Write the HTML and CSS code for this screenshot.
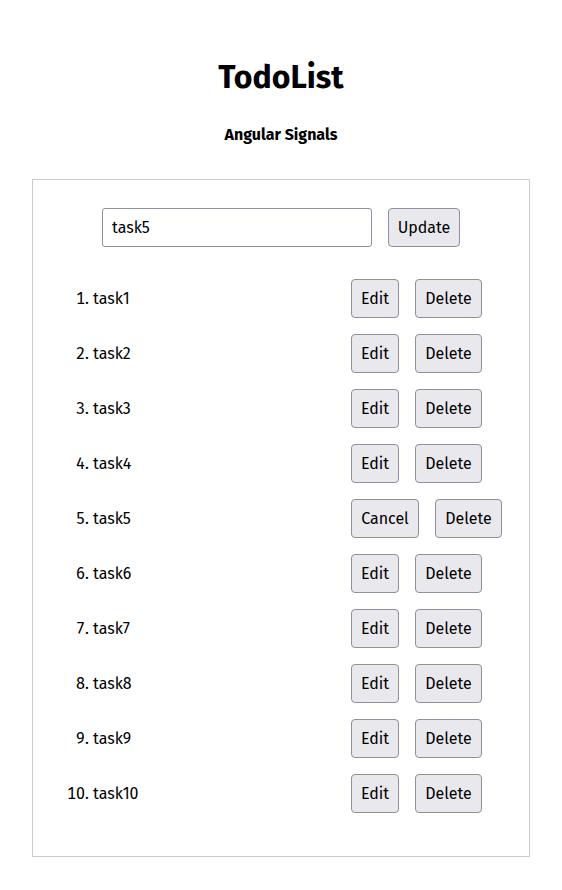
FILE: index.html
```html
<!DOCTYPE html>
<html lang="en">
<head>
<meta charset="utf-8">
<title>TodoList</title>
<link rel="stylesheet" href="styles.css">
</head>
<body>
<header class="header">
  <h1 class="title">TodoList</h1>
  <h2 class="subtitle">Angular Signals</h2>
</header>
<main class="card">
  <form class="form">
    <input class="field" type="text" value="task5">
    <button class="btn btn-update" type="button">Update</button>
  </form>
  <ol class="list">
    <li class="item"><span class="label">task1</span><span class="actions"><button class="btn btn-edit" type="button">Edit</button><button class="btn btn-delete" type="button">Delete</button></span></li>
    <li class="item"><span class="label">task2</span><span class="actions"><button class="btn btn-edit" type="button">Edit</button><button class="btn btn-delete" type="button">Delete</button></span></li>
    <li class="item"><span class="label">task3</span><span class="actions"><button class="btn btn-edit" type="button">Edit</button><button class="btn btn-delete" type="button">Delete</button></span></li>
    <li class="item"><span class="label">task4</span><span class="actions"><button class="btn btn-edit" type="button">Edit</button><button class="btn btn-delete" type="button">Delete</button></span></li>
    <li class="item"><span class="label">task5</span><span class="actions"><button class="btn btn-cancel" type="button">Cancel</button><button class="btn btn-delete" type="button">Delete</button></span></li>
    <li class="item"><span class="label">task6</span><span class="actions"><button class="btn btn-edit" type="button">Edit</button><button class="btn btn-delete" type="button">Delete</button></span></li>
    <li class="item"><span class="label">task7</span><span class="actions"><button class="btn btn-edit" type="button">Edit</button><button class="btn btn-delete" type="button">Delete</button></span></li>
    <li class="item"><span class="label">task8</span><span class="actions"><button class="btn btn-edit" type="button">Edit</button><button class="btn btn-delete" type="button">Delete</button></span></li>
    <li class="item"><span class="label">task9</span><span class="actions"><button class="btn btn-edit" type="button">Edit</button><button class="btn btn-delete" type="button">Delete</button></span></li>
    <li class="item"><span class="label">task10</span><span class="actions"><button class="btn btn-edit" type="button">Edit</button><button class="btn btn-delete" type="button">Delete</button></span></li>
  </ol>
</main>
</body>
</html>
```
FILE: styles.css
```css
html, body {
  margin: 0;
  padding: 0;
  background: #ffffff;
}

body {
  font-family: "Fira Sans", "Open Sans", "Noto Sans", sans-serif;
  color: #000000;
  font-size: 16px;
  padding-bottom: 32px;
}

.header {
  text-align: center;
}

.title {
  font-size: 32px;
  line-height: 40px;
  font-weight: 700;
  margin: 57px 0 0;
}

.subtitle {
  font-size: 16px;
  line-height: 20px;
  font-weight: 700;
  margin: 28px 0 0;
}

.card {
  display: block;
  margin: 34px 32px 0;
  border: 1px solid #cccccc;
  padding: 28px 0 27px;
}

.form {
  display: flex;
  justify-content: center;
  gap: 16px;
  margin: 0;
}

.field {
  box-sizing: border-box;
  width: 270px;
  height: 39px;
  border: 1px solid #8f8f9d;
  border-radius: 3px;
  padding: 0 9px;
  font: inherit;
  font-size: 16px;
  color: #000000;
  background: #ffffff;
  outline: none;
}

.list {
  margin: 32px 0 0;
  padding: 0 0 0 60px;
}

.item {
  height: 39px;
  margin-bottom: 16px;
  line-height: 39px;
}

.item::marker {
  font-size: 16px;
}

.label {
  display: inline-block;
  width: 258px;
  vertical-align: top;
}

.actions {
  display: inline-flex;
  gap: 16px;
  vertical-align: top;
}

.btn {
  box-sizing: border-box;
  height: 39px;
  padding: 0;
  margin: 0;
  border: 1px solid #8f8f9d;
  border-radius: 4px;
  background: #e9e9ed;
  color: #000000;
  font: inherit;
  font-size: 16px;
  line-height: 37px;
  text-align: center;
  cursor: pointer;
}

.btn-edit { width: 48px; }
.btn-delete { width: 67px; }
.btn-cancel { width: 68px; }
.btn-update { width: 72px; }
```
